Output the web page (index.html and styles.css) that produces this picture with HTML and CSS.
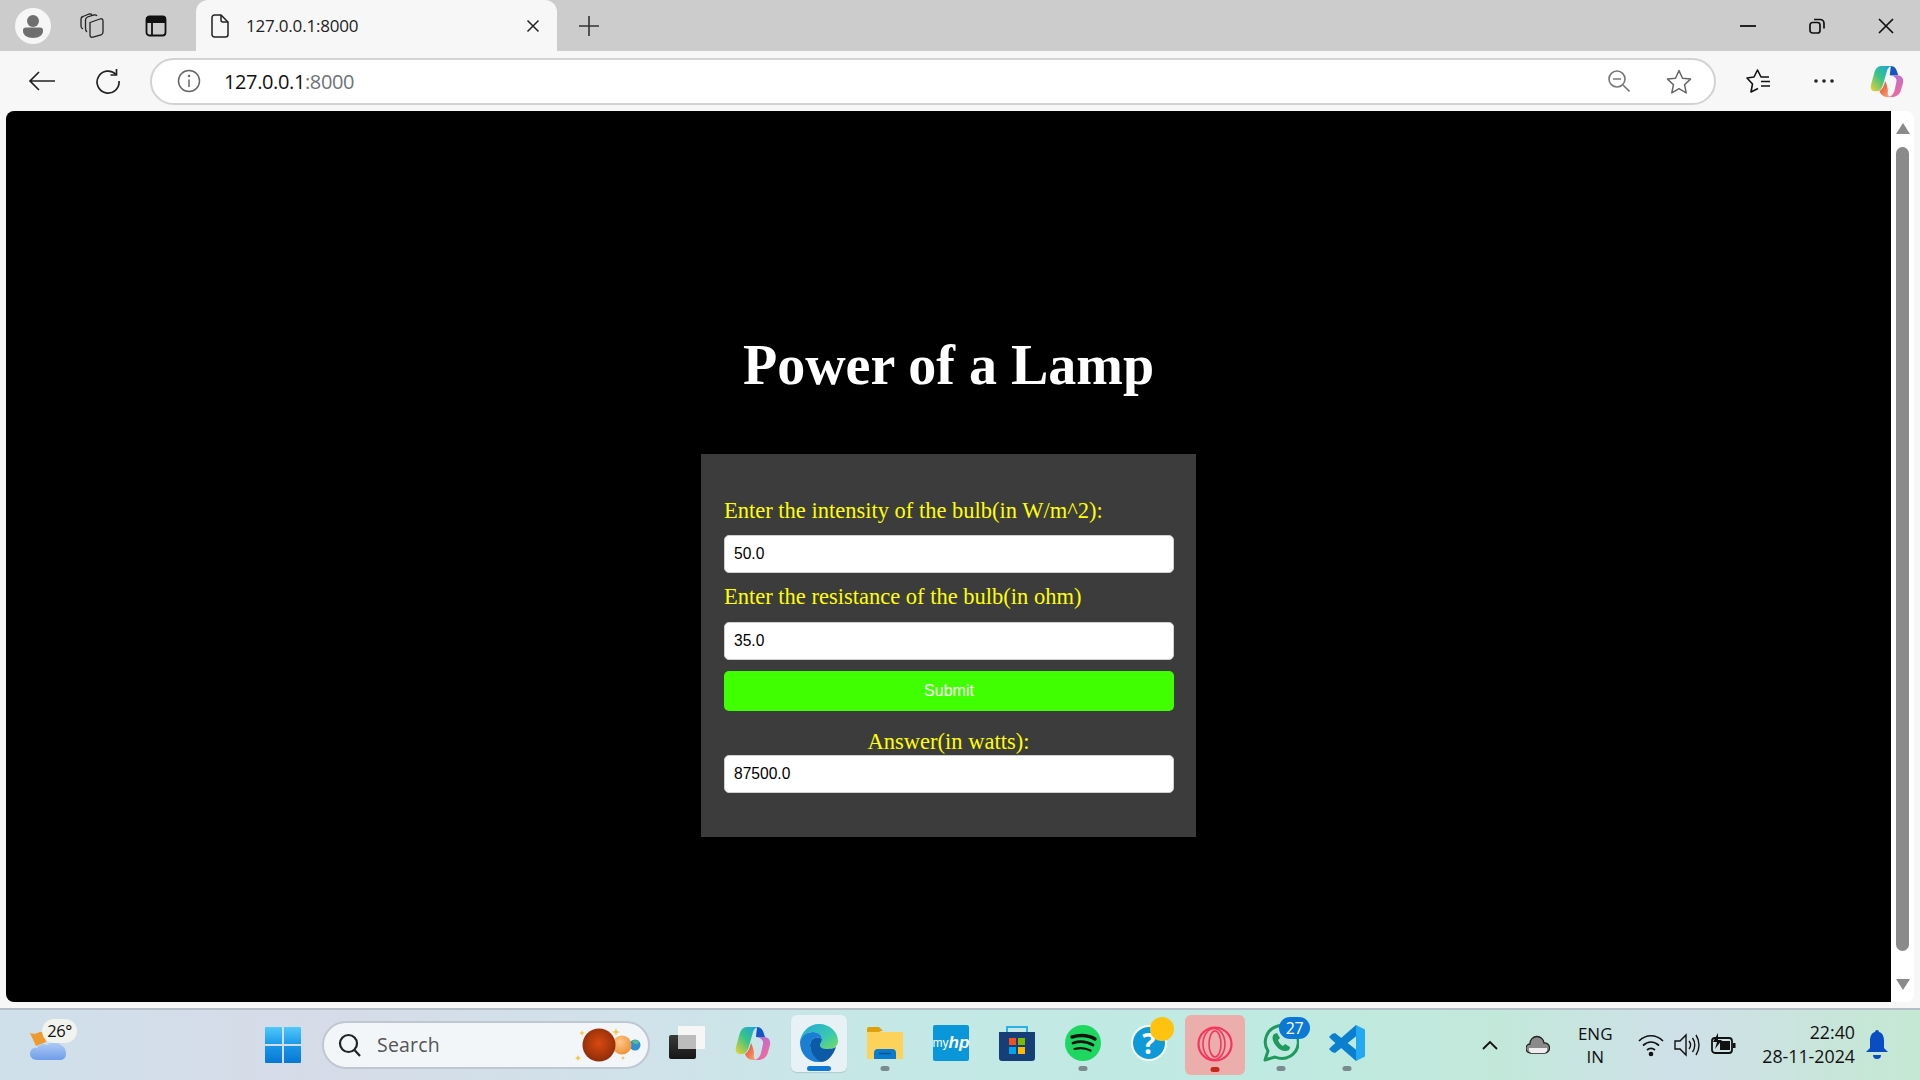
FILE: index.html
```html
<!DOCTYPE html>
<html lang="en">
<head>
    <meta charset="UTF-8">
    <meta name="viewport" content="width=device-width, initial-scale=1.0">
    <title>Power of a Lamp</title>
    <link rel="stylesheet" href="styles.css">
</head>
<body>
    <svg class="defs" width="0" height="0">
        <defs>
            <linearGradient id="copA" x1="1" y1="0" x2="0" y2="1">
                <stop offset="0" stop-color="#1b9de8"/>
                <stop offset="0.5" stop-color="#35c48a"/>
                <stop offset="1" stop-color="#f4d02c"/>
            </linearGradient>
            <linearGradient id="copB" x1="0" y1="0" x2="0.6" y2="1">
                <stop offset="0" stop-color="#a86fe6"/>
                <stop offset="1" stop-color="#f4689a"/>
            </linearGradient>
            <linearGradient id="copC" x1="0" y1="0" x2="1" y2="1">
                <stop offset="0" stop-color="#e8402e"/>
                <stop offset="1" stop-color="#f9b27a"/>
            </linearGradient>
            <symbol id="copilot" viewBox="0 0 36 34">
                <path d="M12 1h12c-4 0-5.500 3-6.500 7L14 20c-1 4-3 8-7 8H5c-3.500 0-5-3-4-7l3-11C5.500 4 8 1 12 1z" fill="url(#copA)"/>
                <path d="M22 1c4 0 6 3 7 7l1 3H21c0-3 1-7 1-10z" fill="#1457c4"/>
                <path d="M20 11h9c4 0 7 3 6 8l-2 7c-1 5-5 8-10 8h-4c3 0 6-3 7-7l2-9c1-4-3-7-8-7z" fill="url(#copB)"/>
                <path d="M16 17c-1 5-3 9-6 11 1 3 4 6 8 6h5c-3 0-5-2-4-6 0-3-1-7-3-11z" fill="url(#copC)"/>
            </symbol>
        </defs>
    </svg>

    <div class="window">
        <header class="tabstrip">
            <div class="profile">
                <svg width="24" height="26" viewBox="0 0 24 26"><circle cx="12" cy="8" r="6" fill="#6f6f6f"/><path d="M2 17c0-1.500 1-2.500 3-2.500h14c2 0 3 1 3 2.500v1c0 4-4 7-10 7S2 22 2 18z" fill="#6f6f6f"/></svg>
            </div>
            <div class="strip-btn">
                <svg width="24" height="25" viewBox="0 0 24 25" fill="none" stroke="#222" stroke-width="1.300"><path d="M10 9.500L20 6q3-1 3 2v11q0 2-2 3l-8 2q-3 1-3-2z"/><path d="M7 19q-1.500-1-1.500-4V7q0-2 2-3L14 2q2-.5 3 1"/><path d="M3 16q-2-1-2-3V6q0-2 2-2.500L9 1q2-.5 3 1"/></svg>
            </div>
            <div class="strip-btn">
                <svg width="22" height="22" viewBox="0 0 22 22" fill="none" stroke="#111" stroke-width="1.800"><rect x="1.500" y="1.500" width="19" height="19" rx="3"/><path d="M2 3h18v4H2z" fill="#111"/><path d="M7 7v13"/></svg>
            </div>
            <div class="tab">
                <svg class="tab-doc" width="18" height="24" viewBox="0 0 18 24" fill="none" stroke="#222" stroke-width="1.500"><path d="M3.500 1h6.500l7 7v12.500a2.500 2.500 0 0 1-2.500 2.500h-11a2.500 2.500 0 0 1-2.500-2.500V3.500A2.500 2.500 0 0 1 3.500 1z"/><path d="M10 1v5a2 2 0 0 0 2 2h5"/></svg>
                <span class="tab-title">127.0.0.1:8000</span>
                <svg class="tab-close" width="14" height="14" viewBox="0 0 14 14" stroke="#222" stroke-width="1.500"><path d="M1.500 1.500l11 11M12.500 1.500l-11 11"/></svg>
            </div>
            <svg class="new-tab" width="22" height="22" viewBox="0 0 22 22" stroke="#333" stroke-width="1.600"><path d="M11 1v20M1 11h20"/></svg>
            <div class="win-controls">
                <svg width="16" height="16" viewBox="0 0 16 16" stroke="#111" stroke-width="1.800"><path d="M0 8h16"/></svg>
                <svg width="16" height="16" viewBox="0 0 16 16" fill="none" stroke="#111" stroke-width="1.700"><rect x="1" y="4.500" width="10" height="10.500" rx="2.500"/><path d="M5 1.500h6a4 4 0 0 1 4 4v5"/></svg>
                <svg width="16" height="16" viewBox="0 0 16 16" stroke="#111" stroke-width="1.700"><path d="M1 1l14 14M15 1L1 15"/></svg>
            </div>
        </header>

        <nav class="toolbar">
            <svg class="nav-icon" width="28" height="22" viewBox="0 0 28 22" fill="none" stroke="#222" stroke-width="1.700"><path d="M27 11H2M11 2l-9 9 9 9"/></svg>
            <svg class="nav-icon" width="26" height="26" viewBox="0 0 26 26" fill="none" stroke="#222" stroke-width="1.700"><path d="M21 6.500A11 11 0 1 0 24 13"/><path d="M21.500 1v6h-6"/></svg>
            <div class="address">
                <svg width="24" height="24" viewBox="0 0 24 24" fill="none" stroke="#666" stroke-width="1.500"><circle cx="12" cy="12" r="10.500"/><path d="M12 10.500V18"/><circle cx="12" cy="7" r="0.500"/></svg>
                <span class="url">127.0.0.1<span class="url-port">:8000</span></span>
                <svg class="addr-zoom" width="22" height="22" viewBox="0 0 22 22" fill="none" stroke="#777" stroke-width="1.600"><circle cx="9" cy="9" r="8"/><path d="M5 9h8M15 15l6.500 6.500"/></svg>
                <svg class="addr-star" width="26" height="25" viewBox="0 0 26 25" fill="none" stroke="#666" stroke-width="1.500" stroke-linejoin="round"><path d="M13 1.500l3.500 7.700 8 .9-6 5.600 1.700 8.200-7.200-4.200-7.200 4.200 1.700-8.200-6-5.600 8-.9z"/></svg>
            </div>
            <svg class="tool-fav" width="25" height="24" viewBox="0 0 25 24" fill="none" stroke="#111" stroke-width="1.600" stroke-linejoin="round"><path d="M23 8h-8l-3.500-7L8 8l-7 1 5.500 6L5 23l7-3.500"/><path d="M15 12.500h9M15 17h9"/></svg>
            <svg class="tool-more" width="20" height="4" viewBox="0 0 20 4" fill="#222"><circle cx="2" cy="2" r="1.800"/><circle cx="10" cy="2" r="1.800"/><circle cx="18" cy="2" r="1.800"/></svg>
            <svg class="tool-copilot" width="34" height="32"><use href="#copilot"/></svg>
        </nav>

        <div class="content">
            <main class="page">
                <h1 class="title">Power of a Lamp</h1>
                <form class="panel" onsubmit="return false">
                    <label class="field-label" for="intensity">Enter the intensity of the bulb(in W/m^2):</label>
                    <input class="field" id="intensity" type="text" value="50.0">
                    <label class="field-label second" for="resistance">Enter the resistance of the bulb(in ohm)</label>
                    <input class="field" id="resistance" type="text" value="35.0">
                    <button class="submit" type="submit">Submit</button>
                    <label class="answer-label" for="answer">Answer(in watts):</label>
                    <input class="field" id="answer" type="text" value="87500.0">
                </form>
            </main>
            <div class="scrollbar">
                <span class="arrow-up"></span>
                <span class="thumb"></span>
                <span class="arrow-down"></span>
            </div>
        </div>

        <footer class="taskbar">
            <div class="weather">
                <svg width="36" height="28" viewBox="0 0 36 28"><defs><linearGradient id="cloud" x1="0" y1="0" x2="0" y2="1"><stop offset="0" stop-color="#aecbf6"/><stop offset="1" stop-color="#6f9de8"/></linearGradient></defs><path d="M0 1c5 2 10 0 13-5l3 14-10 4z" fill="#ee9a2e"/><path d="M7 28c-4 0-7-3-7-6 0-4 3-7 7-6 2-4 6-5 10-3 3-3 11-4 15 1 3 1 4 5 4 8 0 4-3 6-6 6z" fill="url(#cloud)"/></svg>
                <span class="temp">26°</span>
            </div>
            <div class="start">
                <svg width="36" height="36" viewBox="0 0 36 36"><defs><linearGradient id="winTop" x1="0" y1="0" x2="0" y2="1"><stop offset="0" stop-color="#4fc9fb"/><stop offset="1" stop-color="#1c9be8"/></linearGradient><linearGradient id="winBot" x1="0" y1="0" x2="0" y2="1"><stop offset="0" stop-color="#1a96e6"/><stop offset="1" stop-color="#0678d4"/></linearGradient></defs><path d="M1 0h16v17H0V1a1 1 0 0 1 1-1zM19 0h16a1 1 0 0 1 1 1v16H19z" fill="url(#winTop)"/><path d="M0 19h17v17H1a1 1 0 0 1-1-1zM19 19h17v16a1 1 0 0 1-1 1H19z" fill="url(#winBot)"/></svg>
            </div>
            <div class="search">
                <svg width="24" height="24" viewBox="0 0 24 24" fill="none" stroke="#222" stroke-width="2.200"><circle cx="10.500" cy="10.500" r="8.500"/><path d="M16.500 17l5.500 6"/></svg>
                <span class="search-text">Search</span>
                <svg class="planets" width="72" height="44" viewBox="0 0 72 44"><defs><radialGradient id="mars" cx="0.5" cy="0.45" r="0.6"><stop offset="0" stop-color="#d84a10"/><stop offset="1" stop-color="#8a2a08"/></radialGradient><radialGradient id="venus" cx="0.4" cy="0.35" r="0.7"><stop offset="0" stop-color="#fcc88a"/><stop offset="1" stop-color="#ee8f30"/></radialGradient></defs><circle cx="61" cy="21" r="5.500" fill="#2f8fd0"/><path d="M58 17c2-1.500 5-1 7 1-1 3-5 3-7-1z" fill="#52c08a"/><circle cx="48" cy="21" r="9.500" fill="url(#venus)"/><circle cx="25" cy="21" r="16.500" fill="url(#mars)"/><path d="M8 6l.8 2.200L11 9l-2.200.8L8 12l-.8-2.200L5 9l2.200-.8zM42 4l1 3 3 1-3 1-1 3-1-3-3-1 3-1zM4 31l1 2 2 1-2 1-1 2-1-2-2-1 2-1zM49 32l.7 1.300L51 34l-1.300.7L49 36l-.7-1.300L47 34l1.300-.7z" fill="#f3c64a"/></svg>
            </div>
            <div class="dock">
                <div class="dock-item">
                    <svg width="36" height="33" viewBox="0 0 36 33"><defs><linearGradient id="tvDark" x1="0" y1="0" x2="0" y2="1"><stop offset="0" stop-color="#3a3a3a"/><stop offset="1" stop-color="#161616"/></linearGradient></defs><rect x="0" y="9" width="27" height="24" rx="2" fill="url(#tvDark)"/><rect x="9" y="0" width="27" height="23" rx="1" fill="#f6f6f6"/><rect x="9" y="9" width="18" height="14" fill="#bcbcbc"/></svg>
                </div>
                <div class="dock-item">
                    <svg width="36" height="34"><use href="#copilot"/></svg>
                </div>
                <div class="dock-item active">
                    <svg width="38" height="38" viewBox="0 0 38 38"><defs><linearGradient id="edgeTop" x1="0" y1="0" x2="1" y2="1"><stop offset="0" stop-color="#1fa9d6"/><stop offset="0.6" stop-color="#39c9b0"/><stop offset="1" stop-color="#7bdc5a"/></linearGradient></defs><path d="M19 0c11 0 19 8 19 17 0 6-5 8-10 8-4 0-8-1-8-4 0-2 2-3 2-6 0-4-4-7-9-7C7 8 1 13 0 18 1 8 9 0 19 0z" fill="url(#edgeTop)"/><path d="M0 18c1-6 7-10 13-10 5 0 9 3 9 7-3-2-9-2-11 2-3 6 1 15 10 20-1 1-2 1-3 1C8 38 0 30 0 18z" fill="#1a7fd2"/><path d="M11 17c2-4 8-4 11-2 0 3-2 4-2 6 0 3 4 4 8 4 3 0 6-1 8-2-3 9-9 15-15 15-9-5-13-15-10-21z" fill="#0d5aa8"/></svg>
                    <span class="run-bar"></span>
                </div>
                <div class="dock-item">
                    <svg width="36" height="34" viewBox="0 0 36 34"><path d="M0 3a2 2 0 0 1 2-2h10l4 4h-2l-4 2H0z" fill="#e0a108"/><path d="M0 6h36v26a1 1 0 0 1-1 1H1a1 1 0 0 1-1-1z" fill="#fdd25a"/><path d="M7 33v-6a4 4 0 0 1 4-4h14a4 4 0 0 1 4 4v6z" fill="#0a7cd0"/><path d="M12 27.500h12" stroke="#07508e" stroke-width="1.500"/></svg>
                    <span class="run-dot"></span>
                </div>
                <div class="dock-item">
                    <div class="myhp"><span class="my">my</span><span class="hp">hp</span></div>
                </div>
                <div class="dock-item">
                    <svg width="36" height="36" viewBox="0 0 36 36"><path d="M8 7V2h20v5" fill="none" stroke="#2ab0ea" stroke-width="2"/><path d="M0 7h36v26a3 3 0 0 1-3 3H3a3 3 0 0 1-3-3z" fill="#163f77"/><path d="M10 13h7v7h-7z" fill="#f25022"/><path d="M19 13h7v7h-7z" fill="#7fba00"/><path d="M10 22h7v7h-7z" fill="#00a4ef"/><path d="M19 22h7v7h-7z" fill="#ffb900"/></svg>
                </div>
                <div class="dock-item">
                    <svg width="36" height="36" viewBox="0 0 36 36" fill="none" stroke="#111" stroke-linecap="round"><circle cx="18" cy="18" r="18" fill="#1ed760" stroke="none"/><path d="M7 12c7-2 16-2 23 2" stroke-width="3.400"/><path d="M8 18c6-2 14-1.500 20 2" stroke-width="2.800"/><path d="M9.500 24c5-1.500 11-1 16 1.500" stroke-width="2.200"/></svg>
                    <span class="run-dot"></span>
                </div>
                <div class="dock-item">
                    <div class="help">
                        <span class="help-mark">?</span>
                        <span class="help-badge"></span>
                    </div>
                </div>
                <div class="dock-item opera">
                    <svg width="36" height="36" viewBox="0 0 36 36" fill="none" stroke="#f5365c"><circle cx="18" cy="18" r="16.500" stroke-width="2.200"/><ellipse cx="17" cy="18" rx="11" ry="15.500" stroke-width="1.600"/><ellipse cx="18" cy="18" rx="6" ry="13" stroke-width="1.600"/></svg>
                    <span class="run-dot red"></span>
                </div>
                <div class="dock-item">
                    <div class="whatsapp">
                        <svg width="36" height="38" viewBox="0 0 36 38" fill="none"><path d="M2 36l3-9A16.500 16.500 0 1 1 12 33z" stroke="#1f9a5c" stroke-width="3" stroke-linejoin="round"/><path d="M11 10c-2 2-2 5 0 9 3 5 7 8 11 8 3 0 5-1 5-4l-5-3-2 2c-2-1-4-3-5-6l2-2-3-5z" fill="#1f9a5c"/></svg>
                        <span class="wa-badge">27</span>
                    </div>
                    <span class="run-dot"></span>
                </div>
                <div class="dock-item">
                    <svg width="36" height="36" viewBox="0 0 36 36"><path d="M27 0L3 21l-3 3 3 3 3 1 24-19V3z" fill="#0a7fd0"/><path d="M27 36L3 15l-3-3 3-3 3-1 24 19v6z" fill="#0a7fd0"/><path d="M27 0l9 4.500v27L27 36z" fill="#23a9f2"/></svg>
                    <span class="run-dot"></span>
                </div>
            </div>
            <div class="tray">
                <svg class="tray-chevron" width="16" height="10" viewBox="0 0 16 10" fill="none" stroke="#111" stroke-width="1.800"><path d="M1 9l7-7 7 7"/></svg>
                <svg class="tray-cloud" width="24" height="20" viewBox="0 0 24 20"><path d="M5 18a4.500 4.500 0 0 1-1-9 7 7 0 0 1 14-1 5 5 0 0 1 1 10z" fill="#8a8a8a" stroke="#222" stroke-width="1.300"/><path d="M3 13h18v3l-2 2H5l-2-2z" fill="#eee"/></svg>
                <div class="lang"><span>ENG</span><span>IN</span></div>
                <svg class="tray-wifi" width="26" height="26" viewBox="0 0 26 26" fill="none" stroke="#111" stroke-width="1.700"><path d="M1 9c7-7 17-7 24 0M5 13.500c5-4.500 11-4.500 16 0M9 18c3-2.500 5-2.500 8 0"/><circle cx="13" cy="22" r="1.500" fill="#111"/></svg>
                <svg class="tray-volume" width="26" height="24" viewBox="0 0 26 24" fill="none" stroke="#111" stroke-width="1.400"><path d="M1 8h5l6-6v20l-6-6H1z"/><path d="M15 8c2 2.500 2 5.500 0 8M18.500 5c3 4 3 10 0 14M22 2c4 6 4 14 0 20"/></svg>
                <svg class="tray-battery" width="26" height="24" viewBox="0 0 26 24"><rect x="1" y="5" width="20" height="15" rx="3" fill="none" stroke="#111" stroke-width="1.800"/><rect x="9" y="8" width="10" height="9" fill="#111"/><rect x="22" y="10" width="2.500" height="5" fill="#111"/><path d="M7 0L2 9h4l-2 7 7-9H7z" fill="#111"/></svg>
                <div class="clock"><span>22:40</span><span>28-11-2024</span></div>
                <svg class="tray-bell" width="22" height="30" viewBox="0 0 22 30"><path d="M11 0a2 2 0 0 1 2 2c4 1 5 5 5 9v7l4 4H0l4-4v-7c0-4 1-8 5-9a2 2 0 0 1 2-2z" fill="#0a4cc4"/><path d="M7 25h8a4 4 0 0 1-8 0z" fill="#0a4cc4"/></svg>
            </div>
        </footer>
    </div>
</body>
</html>
```

FILE: styles.css
```css
* {
    box-sizing: border-box;
}
html, body {
    margin: 0;
    height: 100%;
    overflow: hidden;
}
body {
    font-family: "Open Sans", Arial, sans-serif;
    background: #f7f7f7;
}
.defs {
    display: block;
    height: 0;
}
.window {
    display: flex;
    flex-direction: column;
    height: 1080px;
}

/* Tab strip */
.tabstrip {
    height: 51px;
    flex: none;
    display: flex;
    align-items: center;
    background: #cccccc;
    padding-left: 15px;
}
.profile {
    width: 36px;
    height: 36px;
    border-radius: 50%;
    background: #f6f6f6;
    display: flex;
    align-items: center;
    justify-content: center;
    margin-right: 28px;
}
.strip-btn {
    width: 26px;
    height: 26px;
    display: flex;
    align-items: center;
    justify-content: center;
    margin-right: 38px;
}
.strip-btn + .strip-btn {
    margin-right: 27px;
}
.tab {
    width: 361px;
    height: 51px;
    background: #f7f7f7;
    border-radius: 12px 12px 0 0;
    display: flex;
    align-items: center;
    padding: 0 17px 0 15px;
}
.tab-title {
    margin-left: 17px;
    font-size: 17px;
    color: #222;
    flex: 1;
    letter-spacing: -0.2px;
}
.new-tab {
    margin-left: 21px;
}
.win-controls {
    margin-left: auto;
    display: flex;
    gap: 53px;
    padding-right: 26px;
}

/* Toolbar */
.toolbar {
    height: 60px;
    flex: none;
    display: flex;
    align-items: center;
    background: #f7f7f7;
    padding-left: 28px;
}
.nav-icon + .nav-icon {
    margin-left: 39px;
}
.address {
    width: 1566px;
    height: 47px;
    margin-left: 29px;
    background: #fff;
    border: 2px solid #d2d2d2;
    border-radius: 24px;
    display: flex;
    align-items: center;
    padding-left: 25px;
}
.url {
    margin-left: 23px;
    font-size: 20px;
    color: #111;
    letter-spacing: -0.38px;
}
.url-port {
    color: #6e7378;
}
.addr-zoom {
    margin-left: auto;
}
.addr-star {
    margin-left: 36px;
    margin-right: 22px;
}
.tool-fav {
    margin-left: 30px;
}
.tool-more {
    margin-left: 43px;
}
.tool-copilot {
    margin-left: 36px;
}

/* Page */
.content {
    flex: 1;
    display: flex;
    min-height: 0;
    padding: 0 6px 6px 6px;
}
.page {
    flex: 1;
    background: #000;
    border-radius: 8px 0 0 8px;
    display: flex;
    flex-direction: column;
    align-items: center;
    padding-top: 222px;
}
.title {
    margin: 0;
    font-family: "Liberation Serif", "Times New Roman", serif;
    font-size: 56px;
    line-height: 64px;
    font-weight: bold;
    color: #fff;
}
.panel {
    width: 495px;
    height: 383px;
    margin-top: 57px;
    background: #3c3c3c;
    padding: 44px 23px 0;
    display: flex;
    flex-direction: column;
    font-family: "Liberation Serif", "Times New Roman", serif;
}
.field-label {
    font-size: 22.5px;
    line-height: 26px;
    color: #ffff00;
    margin-bottom: 11px;
}
.field-label.second {
    margin-top: 11px;
    margin-bottom: 12px;
}
.field {
    width: 450px;
    height: 38px;
    flex: none;
    border: 1px solid #cfcfcf;
    border-radius: 5px;
    padding: 0 9px;
    background: #fff;
    color: #000;
    font-family: "Liberation Sans", Arial, sans-serif;
    font-size: 15.6px;
}
.submit {
    width: 450px;
    height: 40px;
    flex: none;
    margin-top: 11px;
    border: none;
    border-radius: 5px;
    background: #40ff00;
    color: #fff;
    font-family: "Liberation Sans", Arial, sans-serif;
    font-size: 16px;
}
.answer-label {
    margin-top: 17px;
    text-align: center;
    font-size: 22.5px;
    line-height: 27px;
    color: #ffff00;
}
.scrollbar {
    width: 23px;
    flex: none;
    background: #fff;
    border-radius: 0 8px 8px 0;
    display: flex;
    flex-direction: column;
    align-items: center;
    padding-top: 12px;
}
.arrow-up {
    width: 0;
    height: 0;
    border-left: 7px solid transparent;
    border-right: 7px solid transparent;
    border-bottom: 11px solid #8a8a8a;
}
.thumb {
    width: 13px;
    height: 804px;
    margin-top: 13px;
    border-radius: 7px;
    background: #8a8a8a;
}
.arrow-down {
    width: 0;
    height: 0;
    margin-top: 28px;
    border-left: 7px solid transparent;
    border-right: 7px solid transparent;
    border-top: 11px solid #8a8a8a;
}

/* Taskbar */
.taskbar {
    height: 72px;
    flex: none;
    display: flex;
    align-items: center;
    border-top: 2px solid #b3bec6;
    background: linear-gradient(90deg, #cfe0ea 0, #d6dbe8 300px, #d0e2ea 640px, #c4e8e6 900px, #bfeae2 1250px, #c2e8da 1500px, #cfe0e8 1680px, #c4e8d2 1920px);
    padding-left: 28px;
}
.weather {
    width: 50px;
    height: 52px;
    position: relative;
    display: flex;
    align-items: flex-end;
    padding: 0 0 11px 2px;
}
.temp {
    position: absolute;
    left: 14px;
    top: 0;
    width: 35px;
    height: 24px;
    border-radius: 12px;
    background: #f1f4ee;
    font-size: 16.5px;
    line-height: 24px;
    text-align: center;
    color: #111;
    letter-spacing: -0.5px;
}
.start {
    margin-left: 187px;
    display: flex;
}
.search {
    width: 328px;
    height: 48px;
    margin-left: 21px;
    border: 2px solid #bfc8d2;
    border-radius: 24px;
    background: #f2f6f9;
    display: flex;
    align-items: center;
    padding-left: 14px;
    position: relative;
}
.search-text {
    margin-left: 15px;
    font-size: 19.5px;
    line-height: 24px;
    color: #555;
    letter-spacing: 0.2px;
}
.planets {
    position: absolute;
    right: 2px;
    top: 1px;
}
.dock {
    margin-left: 4px;
    display: flex;
}
.dock-item {
    width: 66px;
    height: 57px;
    position: relative;
    display: flex;
    align-items: center;
    justify-content: center;
    padding-bottom: 2px;
    border-radius: 6px;
}
.dock-item.active {
    width: 56px;
    margin: 0 5px;
    background: #e8f1f6;
    box-shadow: 0 1px 1px rgba(0, 0, 0, 0.12);
}
.dock-item.opera {
    width: 60px;
    height: 60px;
    margin: 0 3px;
    background: #ecaeaa;
}
.run-bar, .run-dot {
    position: absolute;
    bottom: 1px;
    left: 50%;
    transform: translateX(-50%);
    height: 5px;
    border-radius: 3px;
}
.run-bar {
    width: 24px;
    background: #0a78d4;
}
.run-dot {
    width: 9px;
    background: #7b8a8e;
}
.run-dot.red {
    bottom: 3px;
    background: #c6281e;
}
.myhp {
    width: 36px;
    height: 36px;
    border-radius: 2px;
    background: #0a97d9;
    color: #fff;
    font-family: "Liberation Sans", Arial, sans-serif;
    display: flex;
    align-items: center;
    justify-content: center;
}
.my {
    font-size: 12px;
}
.hp {
    font-size: 17px;
    font-style: italic;
    font-weight: bold;
}
.help {
    width: 36px;
    height: 36px;
    border-radius: 50%;
    background: #0e9ad8;
    border: 2px solid #f5fbfd;
    color: #fff;
    display: flex;
    align-items: center;
    justify-content: center;
    position: relative;
    font-weight: bold;
    font-size: 28px;
}
.help-badge {
    position: absolute;
    top: -10px;
    right: -9px;
    width: 24px;
    height: 24px;
    border-radius: 50%;
    background: #ffc20e;
}
.whatsapp {
    position: relative;
    display: flex;
}
.wa-badge {
    position: absolute;
    top: -7px;
    right: -11px;
    width: 31px;
    height: 22px;
    border-radius: 11px;
    background: #0a78d4;
    color: #fff;
    font-size: 16px;
    line-height: 22px;
    text-align: center;
    letter-spacing: -0.3px;
}
.tray {
    margin-left: auto;
    display: flex;
    align-items: center;
    color: #111;
    padding-right: 32px;
}
.lang, .clock {
    display: flex;
    flex-direction: column;
    font-size: 17px;
    line-height: 24px;
}
.lang {
    align-items: center;
    width: 50px;
    margin-left: 20px;
    line-height: 23px;
}
.clock {
    align-items: flex-end;
    margin-left: 25px;
    margin-bottom: 2px;
    font-size: 17.8px;
}
.tray-cloud {
    margin-left: 28px;
}
.tray-wifi {
    margin-left: 18px;
}
.tray-volume {
    margin-left: 10px;
}
.tray-battery {
    margin-left: 11px;
}
.tray-bell {
    margin-left: 11px;
}
```
